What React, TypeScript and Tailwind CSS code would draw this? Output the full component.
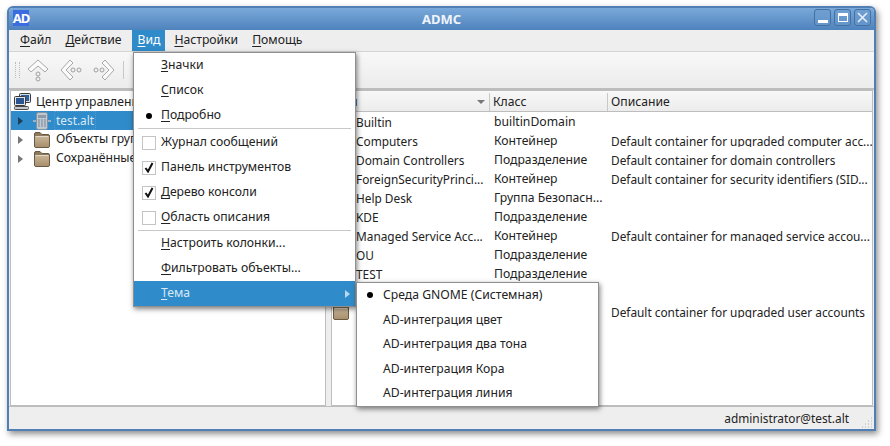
const font = "font-['Noto_Sans',sans-serif]";

function Folder({ className = "" }: { className?: string }) {
  return (
    <svg width="16" height="16" viewBox="0 0 16 16" className={className}>
      <defs>
        <linearGradient id="folderFill" x1="0" y1="0" x2="0" y2="1">
          <stop offset="0" stopColor="#c9b698" />
          <stop offset="1" stopColor="#a88f6d" />
        </linearGradient>
      </defs>
      <path d="M0.5 2 Q0.5 0.5 2 0.5 H6 L8 2.5 H14 Q15.5 2.5 15.5 4 V14 Q15.5 15.5 14 15.5 H2 Q0.5 15.5 0.5 14 Z" fill="#8d795c" stroke="#6b5a42" />
      <rect x="1" y="4" width="14" height="11" rx="1" fill="url(#folderFill)" />
      <path d="M1.5 4.5 H14.5" stroke="#e4d9c8" />
    </svg>
  );
}

function Computer() {
  return (
    <svg width="17" height="17" viewBox="0 0 17 17">
      <rect x="5.5" y="0.5" width="11" height="9" rx="1" fill="#d5dbe2" stroke="#3a3a3a" />
      <rect x="7" y="2" width="8" height="6" fill="#2f5f9c" />
      <rect x="0.5" y="3.5" width="11" height="9" rx="1" fill="#e2e6ea" stroke="#3a3a3a" />
      <rect x="2" y="5" width="8" height="6" fill="#2a5590" />
      <rect x="0.5" y="13.5" width="14" height="3" rx="1" fill="#c4c8cc" stroke="#4a4a4a" />
    </svg>
  );
}

function Server() {
  return (
    <svg width="18" height="18" viewBox="0 0 18 18">
      <path d="M0 9 H18" stroke="#9fb2c4" strokeWidth="2" />
      <rect x="3.5" y="0.5" width="11" height="17" rx="2" fill="#bcc8d3" stroke="#84929f" />
      <rect x="5" y="3" width="8" height="3" fill="#8d9aa6" />
      <path d="M5 8 H13 M5 10 H13 M5 12 H13 M5 14 H13" stroke="#7b8894" strokeDasharray="2 1" />
    </svg>
  );
}

function NavIcon({ d, dots }: { d: string; dots: [number, number][] }) {
  return (
    <svg width="24" height="24" viewBox="0 0 24 24">
      <path d={d} fill="#fbfbfb" stroke="#a8a8a8" strokeLinejoin="round" />
      {dots.map(([x, y]) => (
        <circle key={`${x}-${y}`} cx={x} cy={y} r="2" fill="none" stroke="#a0a0a0" />
      ))}
    </svg>
  );
}

function Under({ c, rest }: { c: string; rest: string }) {
  return (
    <span>
      <span className="underline underline-offset-2">{c}</span>
      {rest}
    </span>
  );
}

function WinButton({ children }: { children: React.ReactNode }) {
  return (
    <div className="flex h-[17px] w-[17px] items-center justify-center rounded-[3px] border border-[#44709f] bg-[#6a9bcf]/60">
      {children}
    </div>
  );
}

const rows = [
  ["Builtin", "builtinDomain", ""],
  ["Computers", "Контейнер", "Default container for upgraded computer acc..."],
  ["Domain Controllers", "Подразделение", "Default container for domain controllers"],
  ["ForeignSecurityPrinci...", "Контейнер", "Default container for security identifiers (SID..."],
  ["Help Desk", "Группа Безопасн...", ""],
  ["KDE", "Подразделение", ""],
  ["Managed Service Acc...", "Контейнер", "Default container for managed service accou..."],
  ["OU", "Подразделение", ""],
  ["TEST", "Подразделение", ""],
  ["", "", ""],
  ["Users", "Контейнер", "Default container for upgraded user accounts"],
];

function MenuRow({ children, mark }: { children: React.ReactNode; mark?: "dot" | "off" | "on" }) {
  return (
    <div className="flex h-[25px] items-center">
      <div className="flex w-[27px] shrink-0 items-center justify-center">
        {mark === "dot" && <div className="ml-[2px] h-[6px] w-[6px] rounded-full bg-black" />}
        {(mark === "off" || mark === "on") && (
          <div className="ml-[2px] flex h-[14px] w-[14px] items-center justify-center border border-[#c4c4c4] bg-white">
            {mark === "on" && (
              <svg width="10" height="11" viewBox="0 0 10 11">
                <path d="M1.5 6 L4 9.5 L8.5 1" fill="none" stroke="#111" strokeWidth="2" />
              </svg>
            )}
          </div>
        )}
      </div>
      {children}
    </div>
  );
}

function Sep({ className = "" }: { className?: string }) {
  return <div className={`mx-[4px] h-px bg-[#c8c8c8] ${className}`} />;
}

export default function App() {
  return (
    <div className={`${font} h-[446px] w-[890px] overflow-hidden bg-white pl-[7px] pt-[6px] text-[12.2px] leading-none text-[#222]`}>
      <div className="relative flex h-[425px] w-[869px] flex-col overflow-hidden rounded-t-[6px] border-[2px] border-[#4f7fb5] shadow-[2px_3px_6px_rgba(0,0,0,0.45)]">
        <div className="relative flex h-[22px] shrink-0 items-center justify-center bg-gradient-to-b from-[#7aa9da] to-[#4f83bd]">
          <div className="absolute left-[4px] top-[2px] flex h-[16px] w-[16px] items-center justify-center bg-[#3d6be0] text-[13px] font-bold tracking-[-1px] text-white">AD</div>
          <span className="text-[13px] font-bold text-[#f0f4fa]">ADMC</span>
          <div className="absolute right-[3px] top-[1px] flex gap-[3px]">
            <WinButton><div className="mt-[8px] h-[3px] w-[10px] bg-white" /></WinButton>
            <WinButton><div className="h-[9px] w-[10px] border-[1.5px] border-t-[3px] border-white" /></WinButton>
            <WinButton>
              <svg width="11" height="11" viewBox="0 0 11 11"><path d="M1 1 L10 10 M10 1 L1 10" stroke="#e8eff8" strokeWidth="1.6" /></svg>
            </WinButton>
          </div>
        </div>

        <div className="flex h-[22px] shrink-0 items-center border-b border-[#d4d4d4] bg-[#eeeeee] pl-[4px]">
          <div className="px-[7px]"><Under c="Ф" rest="айл" /></div>
          <div className="px-[7px]"><Under c="Д" rest="ействие" /></div>
          <div className="ml-[4px] mr-[2px] flex h-[21px] items-center bg-[#2f8bc9] px-[5px] text-white"><Under c="В" rest="ид" /></div>
          <div className="px-[7px]"><Under c="Н" rest="астройки" /></div>
          <div className="px-[7px]"><Under c="П" rest="омощь" /></div>
        </div>

        <div className="flex h-[38px] shrink-0 items-center border-b-2 border-[#bdbdbd] bg-gradient-to-b from-[#f8f8f8] to-[#ececec] pl-[6px]">
          <div className="mr-[6px] h-[16px] w-[5px] border-x border-dotted border-[#bbb]" />
          <div className="flex items-center gap-[9px]">
            <NavIcon d="M12 2 L22 11 L19 14 L12 8 L5 14 L2 11 Z" dots={[[12, 16], [12, 21]]} />
            <NavIcon d="M11 2 L14 5 L7 12 L14 19 L11 22 L2 12 Z" dots={[[14, 12], [20, 12]]} />
            <NavIcon d="M13 2 L10 5 L17 12 L10 19 L13 22 L22 12 Z" dots={[[4, 12], [10, 12]]} />
          </div>
          <div className="ml-[7px] h-[18px] w-px bg-[#c8c8c8]" />
        </div>

        <div className="flex min-h-0 flex-1 gap-[5px] bg-[#eeeeee] pl-px pr-px">
          <div className="w-[316px] shrink-0 border border-[#bdbdbd] bg-white pt-px">
            <div className="flex h-[19px] items-center gap-[5px] pl-[3px]">
              <Computer />
              <span className="pt-[2px]">Центр управления</span>
            </div>
            <div className="flex h-[19px] items-center bg-[#2f8bc9] pl-[7px] text-[11.85px] text-[#d8e8f4]">
              <div className="h-0 w-0 border-y-[4px] border-l-[5px] border-y-transparent border-l-[#1d3f5c]" />
              <div className="ml-[10px] mr-[3px]"><Server /></div>
              <span className="border border-dotted border-[#4f9dd3] px-[1px] py-[3px]">test.alt</span>
            </div>
            {["Объекты групповой политики", "Сохранённые запросы"].map((name) => (
              <div key={name} className="flex h-[19px] items-center pl-[7px]">
                <div className="h-0 w-0 border-y-[4px] border-l-[5px] border-y-transparent border-l-[#777]" />
                <Folder className="ml-[11px] mr-[6px]" />
                <span>{name}</span>
              </div>
            ))}
          </div>

          <div className="min-w-0 flex-1 border border-[#bdbdbd] bg-white">
            <div className="grid h-[21px] grid-cols-[158px_118px_1fr] border-b border-[#bdbdbd] bg-gradient-to-b from-[#f8f8f8] to-[#ececec] pt-[2px]">
              <div className="flex items-center justify-between border-r border-[#c8c8c8] pr-[4px]">
                <span>Имя</span>
                <div className="h-0 w-0 border-x-[4px] border-t-[4px] border-x-transparent border-t-[#777]" />
              </div>
              <div className="flex items-center border-r border-[#c8c8c8] pl-[3px]">Класс</div>
              <div className="flex items-center pl-[3px]">Описание</div>
            </div>
            {rows.map(([name, cls, desc], i) => (
              <div key={i} className="grid h-[19px] grid-cols-[158px_118px_1fr] items-center whitespace-nowrap pt-[2px]">
                <div className="flex items-center gap-[7px] overflow-hidden pl-[1px] text-[11.85px]">
                  {name ? <Folder className="mb-[2px] shrink-0" /> : null}
                  <span>{name}</span>
                </div>
                <div className="pl-[4px]">{cls}</div>
                <div className="overflow-hidden pl-[3px] text-[11.85px]">{desc}</div>
              </div>
            ))}
          </div>
        </div>

        <div className="relative flex h-[23px] shrink-0 items-center justify-end border-t border-[#bdbdbd] bg-[#eeeeee] pr-[25px] pt-[2px] text-[11.85px]">
          administrator@test.alt
          <svg width="12" height="12" viewBox="0 0 12 12" className="absolute bottom-[1px] right-[1px]">
            <path d="M10 2 h1 M7 5 h1 M10 5 h1 M4 8 h1 M7 8 h1 M10 8 h1 M1 11 h1 M4 11 h1 M7 11 h1 M10 11 h1" stroke="#b5b5b5" />
          </svg>
        </div>

        <div className="absolute left-[124px] top-[44px] w-[223px] border border-[#8f8f8f] bg-white shadow-[1px_2px_5px_rgba(0,0,0,0.5)]">
          <MenuRow><Under c="З" rest="начки" /></MenuRow>
          <MenuRow><Under c="С" rest="писок" /></MenuRow>
          <MenuRow mark="dot"><Under c="П" rest="одробно" /></MenuRow>
          <Sep className="mb-px" />
          <MenuRow mark="off"><span>Журнал сообщений</span></MenuRow>
          <MenuRow mark="on"><span>Панель инструментов</span></MenuRow>
          <MenuRow mark="on"><Under c="Д" rest="ерево консоли" /></MenuRow>
          <MenuRow mark="off"><Under c="О" rest="бласть описания" /></MenuRow>
          <Sep />
          <MenuRow><Under c="Н" rest="астроить колонки..." /></MenuRow>
          <MenuRow><Under c="Ф" rest="ильтровать объекты..." /></MenuRow>
          <div className="flex h-[25px] items-center justify-between bg-[#2f8bc9] pl-[27px] pr-[5px] text-[#d8e8f4]">
            <Under c="Т" rest="ема" />
            <div className="h-0 w-0 border-y-[4px] border-l-[5px] border-y-transparent border-l-[#b9d8ee]" />
          </div>
        </div>

        <div className="absolute left-[347px] top-[274px] w-[243px] border border-[#8f8f8f] bg-white shadow-[1px_2px_5px_rgba(0,0,0,0.5)]">
          <div className="flex h-[24.5px] items-center">
            <div className="flex w-[26px] justify-center"><div className="h-[6px] w-[6px] rounded-full bg-black" /></div>
            Среда GNOME (Системная)
          </div>
          {["AD-интеграция цвет", "AD-интеграция два тона", "AD-интеграция Кора", "AD-интеграция линия"].map((t) => (
            <div key={t} className="flex h-[24.5px] items-center pl-[26px]">{t}</div>
          ))}
        </div>
      </div>
    </div>
  );
}
